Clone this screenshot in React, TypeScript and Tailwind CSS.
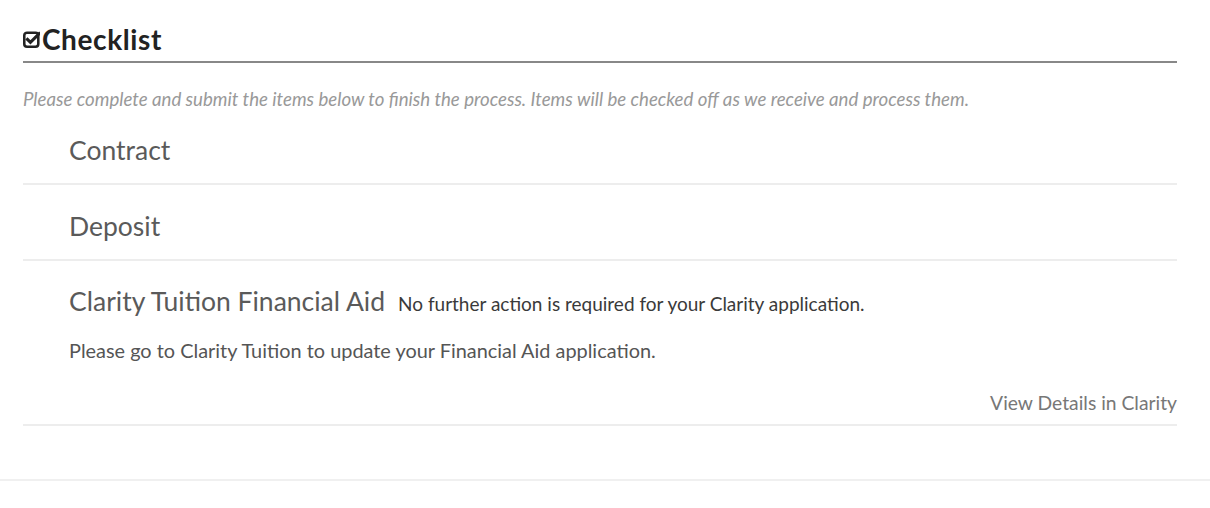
import React from "react";

function CheckSquareIcon() {
  return (
    <svg width="17" height="17" viewBox="0 0 16 16" className="shrink-0 block w-[17px] h-[17px] mt-[1px]">
      <rect x="1.2" y="1.6" width="13.2" height="13.2" rx="2.6" fill="none" stroke="#222" strokeWidth="2.4" />
      <path d="M4.2 7.9 L7 10.7 L15.2 2.5" fill="none" stroke="#222" strokeWidth="2.9" strokeLinecap="square" />
    </svg>
  );
}

export default function App() {
  return (
    <div className="w-[1210px] h-[508px] bg-white" style={{ fontFamily: "Lato, 'Open Sans', sans-serif" }}>
      <div className="pl-[22px] pr-[33px] pt-[22px]">
        <div className="flex items-center gap-[2px] pb-[5px] border-b-2 border-[#888] ml-[1px]">
          <CheckSquareIcon />
          <h2 className="text-[28px] leading-[34px] font-bold tracking-[0.6px] text-[#222]">Checklist</h2>
        </div>
        <p className="ml-[1px] mt-[24px] text-[18.65px] leading-[24px] italic text-[#999]">
          Please complete and submit the items below to finish the process. Items will be checked off as we receive and process them.
        </p>
        <div className="ml-[1px]">
          <div className="pl-[46px] pt-[23px] pb-[17px] border-b-2 border-[#ededed]">
            <span className="text-[26.5px] leading-[32px] text-[#5a5a5a]">Contract</span>
          </div>
          <div className="pl-[46px] pt-[25px] pb-[17px] border-b-2 border-[#ededed]">
            <span className="text-[26.5px] leading-[32px] text-[#5a5a5a]">Deposit</span>
          </div>
          <div className="pt-[24px] pb-[8px] border-b-2 border-[#ededed]">
            <div className="pl-[46px] flex items-baseline gap-[13px]">
              <span className="text-[26.5px] leading-[32px] text-[#5a5a5a]">Clarity Tuition Financial Aid</span>
              <span className="text-[19px] leading-[26px] text-[#3a3a3a]">No further action is required for your Clarity application.</span>
            </div>
            <p className="pl-[46px] mt-[20px] text-[19.9px] leading-[26px] text-[#555]">
              Please go to Clarity Tuition to update your Financial Aid application.
            </p>
            <div className="mt-[27px] text-right text-[19.3px] leading-[26px] text-[#777]">View Details in Clarity</div>
          </div>
        </div>
      </div>
      <div className="mt-[53px] border-b-2 border-[#f0f0f0]" />
    </div>
  );
}
